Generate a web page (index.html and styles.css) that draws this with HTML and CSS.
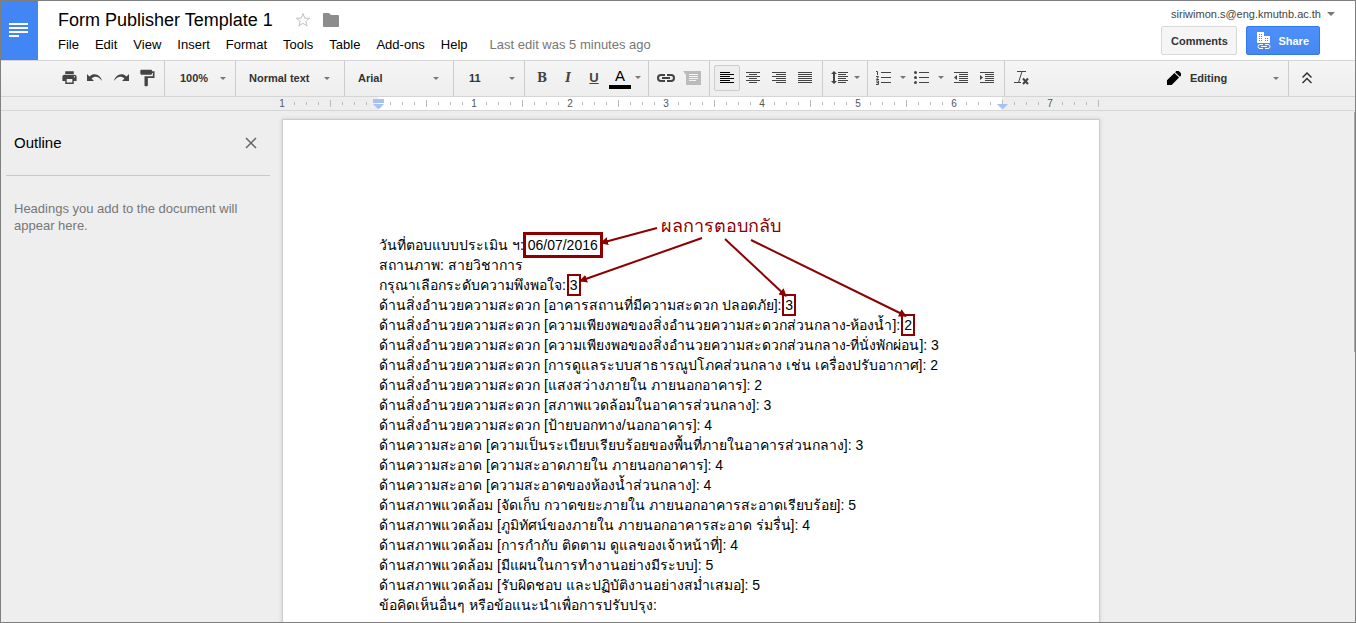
FILE: index.html
```html
<!DOCTYPE html>
<html lang="th">
<head>
<meta charset="utf-8">
<title>Form Publisher Template 1</title>
<link rel="stylesheet" href="styles.css">
</head>
<body>
<div class="app">
  <header class="header">
    <a class="logo" href="#" aria-label="Docs home">
      <svg width="19" height="14" viewBox="0 0 19 14" fill="#fff"><path d="M0 0h19v2H0zM0 4h19v2H0zM0 8h19v2H0zM0 12h10v2H0z"/></svg>
    </a>
    <div class="heading">
      <div class="title-row">
        <h1 class="title">Form Publisher Template 1</h1>
        <button class="plain" aria-label="Star"><svg width="16" height="16" viewBox="0 0 16 16" fill="none" stroke="#c0c0c0"><path d="M8 1.5l1.7 4.6 4.9.2-3.9 3 1.4 4.7L8 11.3 3.9 14l1.4-4.7-3.9-3 4.9-.2z"/></svg></button>
        <button class="plain" aria-label="Move to folder"><svg width="16" height="14" viewBox="0 0 16 14" fill="#8c8c8c"><path d="M0 1Q0 0 1 0H6l2 2h7Q16 2 16 3v10q0 1-1 1H1Q0 14 0 13z"/></svg></button>
      </div>
      <nav class="menus">
        <button>File</button><button>Edit</button><button>View</button><button>Insert</button><button>Format</button><button>Tools</button><button>Table</button><button>Add-ons</button><button>Help</button>
        <span class="last-edit">Last edit was 5 minutes ago</span>
      </nav>
    </div>
    <div class="account">
      <button class="email">siriwimon.s@eng.kmutnb.ac.th<span class="caret big"></span></button>
      <div class="actions">
        <button class="btn">Comments</button>
        <button class="btn share">
          <svg width="14" height="17" viewBox="0 0 14 17"><path fill="#fff" d="M0 0h7v4h6v7H0z"/><path fill="#4a88f4" d="M2 2h1v1H2zM4 2h1v1H4zM2 4h1v1H2zM4 4h1v1H4zM2 6h1v1H2zM4 6h1v1H4zM2 8h1v1H2zM4 8h1v1H4zM8 6h1v1H8zM10 6h1v1h-1zM8 8h1v1H8zM10 8h1v1h-1z"/><path fill="none" stroke="#fff" d="M6 12.500H3a2 2 0 0 0 0 4h3M8 12.500h3a2 2 0 0 1 0 4H8M4 14.500h6"/></svg>
          Share</button>
      </div>
    </div>
  </header>

  <div class="toolbar" role="toolbar">
    <div class="group first">
      <button class="tool" aria-label="Print"><svg width="17" height="17" viewBox="0 0 24 24"><path d="M19 8H5c-1.660 0-3 1.340-3 3v6h4v4h12v-4h4v-6c0-1.660-1.340-3-3-3zm-3 11H8v-5h8v5zm3-7c-.55 0-1-.45-1-1s.45-1 1-1 1 .45 1 1-.45 1-1 1zm-1-9H6v4h12V3z"/></svg></button>
      <button class="tool" aria-label="Undo"><svg width="16" height="10" viewBox="0 0 16 10"><path d="M0 1v7h7L4.500 5.500C8 2.500 12 3.500 15 8 14 3 8-1.500 2.500 3.500z"/></svg></button>
      <button class="tool" aria-label="Redo"><svg width="16" height="10" viewBox="0 0 16 10"><path d="M16 1v7H9l2.500-2.500C8 2.500 4 3.500 1 8 2 3 8-1.500 13.500 3.500z"/></svg></button>
      <button class="tool" aria-label="Paint format"><svg width="20" height="20" viewBox="0 0 24 24"><path d="M18 4V3c0-.55-.45-1-1-1H5c-.55 0-1 .45-1 1v4c0 .55.45 1 1 1h12c.55 0 1-.45 1-1V6h1v4H9v11c0 .55.45 1 1 1h2c.55 0 1-.45 1-1v-9h8V4h-3z"/></svg></button>
    </div>
    <div class="group pick zoom"><select aria-label="Zoom"><option>100%</option></select><span class="caret"></span></div>
    <div class="group pick style"><select aria-label="Paragraph style"><option>Normal text</option></select><span class="caret"></span></div>
    <div class="group pick font"><select aria-label="Font"><option>Arial</option></select><span class="caret"></span></div>
    <div class="group pick size"><select aria-label="Font size"><option>11</option></select><span class="caret"></span></div>
    <div class="group text-format">
      <button class="tool bold">B</button>
      <button class="tool italic">I</button>
      <button class="tool underline">U</button>
      <button class="tool color">A</button>
      <span class="caret"></span>
    </div>
    <div class="group">
      <button class="tool" aria-label="Insert link"><svg width="20" height="10" viewBox="0 0 20 10" fill="none" stroke="#444" stroke-width="2"><path d="M9 2H5a3 3 0 0 0 0 6h4M11 2h4a3 3 0 0 1 0 6h-4M6 5h8"/></svg></button>
      <button class="tool" aria-label="Insert comment"><svg width="18" height="14" viewBox="0 0 18 14"><path fill="#bbb" d="M0 0h18v14H3V4z"/><path fill="#f3f3f3" d="M6 3h9v1H6zM6 5h9v1H6zM6 7h9v1H6zM6 9h7v1H6z"/></svg></button>
    </div>
    <div class="group">
      <button class="tool active" aria-label="Left align"><svg width="14" height="11" viewBox="0 0 14 11"><path fill="#000" d="M0 0h10v1H0zM0 2h14v1H0zM0 4h10v1H0zM0 6h14v1H0zM0 8h10v1H0zM0 10h14v1H0z"/></svg></button>
      <button class="tool" aria-label="Center align"><svg width="14" height="11" viewBox="0 0 14 11"><path d="M0 0h14v1H0zM3 2h8v1H3zM0 4h14v1H0zM3 6h8v1H3zM0 8h14v1H0zM3 10h8v1H3z"/></svg></button>
      <button class="tool" aria-label="Right align"><svg width="14" height="11" viewBox="0 0 14 11"><path d="M0 0h14v1H0zM4 2h10v1H4zM0 4h14v1H0zM4 6h10v1H4zM0 8h14v1H0zM4 10h10v1H4z"/></svg></button>
      <button class="tool" aria-label="Justify"><svg width="14" height="11" viewBox="0 0 14 11"><path d="M0 0h14v1H0zM0 2h14v1H0zM0 4h14v1H0zM0 6h14v1H0zM0 8h14v1H0zM0 10h14v1H0z"/></svg></button>
    </div>
    <div class="group">
      <button class="tool wide" aria-label="Line spacing"><svg width="17" height="13" viewBox="0 0 17 13"><path d="M3 0l3 3H4v7h2l-3 3-3-3h2V3H0zM7 1h10v1H7zM7 3h8v1H7zM7 5h10v1H7zM7 7h8v1H7zM7 9h10v1H7zM7 11h8v1H7z"/></svg><span class="caret"></span></button>
    </div>
    <div class="group">
      <button class="tool wide list" aria-label="Numbered list"><svg width="15" height="14" viewBox="0 0 15 14"><path d="M5 1h10v1H5zM5 6h10v1H5zM5 11h10v1H5z"/><path fill="none" stroke="#444" d="M0 .5h1.500V4M0 5.500h2.500L.5 8.500H3M0 10h2.500v3.500H0M.5 11.700h2"/></svg><span class="caret"></span></button>
      <button class="tool wide list" aria-label="Bulleted list"><svg width="15" height="14" viewBox="0 0 15 14"><path d="M5 1h10v1H5zM5 6h10v1H5zM5 11h10v1H5z"/><circle cx="1.500" cy="1.500" r="1.500"/><circle cx="1.500" cy="6.500" r="1.500"/><circle cx="1.500" cy="11.500" r="1.500"/></svg><span class="caret"></span></button>
      <button class="tool" aria-label="Decrease indent"><svg width="14" height="11" viewBox="0 0 14 11"><path d="M0 0h14v1H0zM5 2h9v1H5zM5 4h9v1H5zM5 6h9v1H5zM5 8h9v1H5zM0 10h14v1H0zM3 3v5L0 5.500z"/></svg></button>
      <button class="tool" aria-label="Increase indent"><svg width="14" height="11" viewBox="0 0 14 11"><path d="M0 0h14v1H0zM5 2h9v1H5zM5 4h9v1H5zM5 6h9v1H5zM5 8h9v1H5zM0 10h14v1H0zM0 3v5l3-2.500z"/></svg></button>
    </div>
    <div class="group last">
      <button class="tool" aria-label="Clear formatting"><svg width="16" height="14" viewBox="0 0 16 14" fill="none" stroke="#444"><path d="M3 .5h9M8 .5L4.500 11.500M0 11.500h7"/><path stroke-width="2" d="M9 7.500l5 5.500M14 7.500L9 13"/></svg></button>
    </div>
    <div class="group pick mode">
      <svg width="14" height="14" viewBox="3 3 18 18"><path fill="#000" d="M2 16V22h6L18.500 11.500l-6-6zM21.500 8.500q1-1 0-2l-4-4q-1-1-2 0l-2 2 6 6z"/></svg>
      <select aria-label="Mode"><option>Editing</option></select><span class="caret"></span>
    </div>
    <button class="collapse" aria-label="Hide menus"><svg width="10" height="12" viewBox="0 0 10 12" fill="none" stroke="#333" stroke-width="1.500"><path d="M.5 5.500L5 1l4.500 4.500M.5 11L5 6.500 9.500 11"/></svg></button>
  </div>

  <div class="ruler">
    <svg class="scale" width="817" height="13" viewBox="0 0 817 13">
      <defs><pattern id="ticks" width="96" height="13" patternUnits="userSpaceOnUse"><path fill="#bbb" d="M12 5h1v3h-1zM24 5h1v3h-1zM36 5h1v3h-1zM48 3h1v7h-1zM60 5h1v3h-1zM72 5h1v3h-1zM84 5h1v3h-1z"/></pattern></defs>
      <rect fill="#fff" x="96" width="624" height="13"/>
      <rect fill="url(#ticks)" width="816" height="13"/>
      <path fill="#bbb" d="M816 3h1v7h-1z"/>
      <g class="numbers"><text x="0" y="10">1</text><text x="192" y="10">1</text><text x="288" y="10">2</text><text x="384" y="10">3</text><text x="480" y="10">4</text><text x="576" y="10">5</text><text x="672" y="10">6</text><text x="768" y="10">7</text></g>
      <path fill="#a4c2f4" d="M91 2h11v4H91zM91 7h11l-5 5h-1zM715 7h11l-5 5h-1z"/>
    </svg>
  </div>

  <div class="workspace">
    <aside class="outline">
      <div class="outline-head">
        <h2>Outline</h2>
        <button class="plain" aria-label="Close outline"><svg width="12" height="12" viewBox="0 0 12 12" stroke="#666" stroke-width="1.500"><path d="M1 1l10 10M11 1L1 11"/></svg></button>
      </div>
      <p>Headings you add to the document will appear here.</p>
    </aside>
    <main class="page">
      <p>วันที่ตอบแบบประเมิน ฯ: <span class="box date">06/07/2016</span></p>
      <p>สถานภาพ: สายวิชาการ</p>
      <p>กรุณาเลือกระดับความพึงพอใจ: <span class="box">3</span></p>
      <p>ด้านสิ่งอำนวยความสะดวก [อาคารสถานที่มีความสะดวก ปลอดภัย]: <span class="box">3</span></p>
      <p>ด้านสิ่งอำนวยความสะดวก [ความเพียงพอของสิ่งอำนวยความสะดวกส่วนกลาง-ห้องน้ำ]: <span class="box">2</span></p>
      <p>ด้านสิ่งอำนวยความสะดวก [ความเพียงพอของสิ่งอำนวยความสะดวกส่วนกลาง-ที่นั่งพักผ่อน]: 3</p>
      <p>ด้านสิ่งอำนวยความสะดวก [การดูแลระบบสาธารณูปโภคส่วนกลาง เช่น เครื่องปรับอากาศ]: 2</p>
      <p>ด้านสิ่งอำนวยความสะดวก [แสงสว่างภายใน ภายนอกอาคาร]: 2</p>
      <p>ด้านสิ่งอำนวยความสะดวก [สภาพแวดล้อมในอาคารส่วนกลาง]: 3</p>
      <p>ด้านสิ่งอำนวยความสะดวก [ป้ายบอกทาง/นอกอาคาร]: 4</p>
      <p>ด้านความสะอาด [ความเป็นระเบียบเรียบร้อยของพื้นที่ภายในอาคารส่วนกลาง]: 3</p>
      <p>ด้านความสะอาด [ความสะอาดภายใน ภายนอกอาคาร]: 4</p>
      <p>ด้านความสะอาด [ความสะอาดของห้องน้ำส่วนกลาง]: 4</p>
      <p>ด้านสภาพแวดล้อม [จัดเก็บ กวาดขยะภายใน ภายนอกอาคารสะอาดเรียบร้อย]: 5</p>
      <p>ด้านสภาพแวดล้อม [ภูมิทัศน์ของภายใน ภายนอกอาคารสะอาด ร่มรื่น]: 4</p>
      <p>ด้านสภาพแวดล้อม [การกำกับ ติดตาม ดูแลของเจ้าหน้าที่]: 4</p>
      <p>ด้านสภาพแวดล้อม [มีแผนในการทำงานอย่างมีระบบ]: 5</p>
      <p>ด้านสภาพแวดล้อม [รับผิดชอบ และปฏิบัติงานอย่างสม่ำเสมอ]: 5</p>
      <p>ข้อคิดเห็นอื่นๆ หรือข้อแนะนำเพื่อการปรับปรุง:</p>
      <svg class="notes" width="816" height="240" viewBox="283 120 816 240">
        <defs><marker id="head" viewBox="0 0 8 8" refX="7" refY="4" markerWidth="8" markerHeight="8" markerUnits="userSpaceOnUse" orient="auto"><path fill="#8b0000" d="M0 0l8 4-8 4z"/></marker></defs>
        <g fill="none" stroke="#8b0000" stroke-width="2">
          <path marker-end="url(#head)" d="M657 228L601 243"/>
          <path marker-end="url(#head)" d="M702 238L580 281"/>
          <path marker-end="url(#head)" d="M725 239L786 296"/>
          <path marker-end="url(#head)" d="M751 240L906 316"/>
        </g>
        <text class="note" x="661" y="232">ผลการตอบกลับ</text>
      </svg>
    </main>
    <span class="scrollbar"></span>
  </div>
</div>
</body>
</html>
```
FILE: styles.css
```css
* { box-sizing: border-box; }
body { margin: 0; font: 13px/16px "Liberation Sans", Arial, sans-serif; color: #000; }
button, select { margin: 0; padding: 0; border: 0; background: none; color: inherit; font: inherit; }
h1, h2, p { margin: 0; font-weight: normal; }
svg { display: block; flex: none; }
.app { display: flex; flex-direction: column; height: 100vh; border: 1px solid #7f7f7f; background: #eee; overflow: hidden; }

.header { display: flex; flex: none; height: 60px; background: #fff; border-bottom: 1px solid #d5d5d5; }
.logo { display: flex; align-items: center; padding: 0 8px 2px; width: 37px; background: #4285f4; }
.heading { padding: 7px 0 0 20px; }
.title-row { display: flex; align-items: center; height: 24px; }
.title { font-size: 18px; line-height: 24px; margin-right: 22px; }
.title-row .plain { margin-right: 12px; }
.menus { display: flex; gap: 16px; align-items: center; height: 26px; white-space: nowrap; }
.last-edit { color: #777; margin-left: 6px; }
.account { margin-left: auto; padding: 3px 20px 0 0; display: flex; flex-direction: column; align-items: flex-end; }
.email { display: flex; align-items: center; gap: 6px; font-size: 11px; color: #444; height: 20px; }
.actions { display: flex; gap: 9px; padding-right: 15px; margin-top: 2px; }
.btn { min-width: 76px; height: 29px; padding: 0 8px; border: 1px solid #d8d8d8; border-radius: 2px; background: #f5f5f5; color: #333; font-size: 11px; font-weight: bold; }
.share { display: flex; align-items: center; gap: 7px; min-width: 72px; padding: 0 10px; border-color: #3079ed; background: linear-gradient(#4d90fe, #4787ed); color: #fff; }

.caret { flex: none; width: 0; border: 3px solid transparent; border-top-color: #777; border-bottom: 0; }
.caret.big { border-width: 4px 4px 0; }

.toolbar { display: flex; flex: none; height: 36px; background: linear-gradient(#f5f5f5, #eee); border-bottom: 1px solid #d5d5d5; color: #333; font-size: 11px; font-weight: bold; }
.group { display: flex; align-items: center; padding: 0 4px 2px; border-right: 1px solid #ccc; }
.group.first { padding-left: 55px; }
.group.last { border: 0; }
.text-format { padding-right: 7px; }
.pick { position: relative; padding: 0 0 2px; }
.pick select { appearance: none; width: 100%; height: 32px; padding-left: 15px; }
.pick .caret { position: absolute; right: 9px; top: 16px; }
.zoom { width: 71px; }
.style { width: 109px; }
.style select, .font select { padding-left: 13px; }
.style .caret, .font .caret { right: 14px; }
.font { width: 109px; }
.size { width: 71px; }
.tool { display: flex; align-items: center; justify-content: center; flex: none; width: 26px; height: 26px; fill: #444; color: #444; font-weight: bold; }
.tool.wide { width: 36px; gap: 6px; }
.tool.list { width: 38px; gap: 9px; }
.active { background: #eee; border: 1px solid #ccc; border-radius: 2px; }
.bold { font-family: "DejaVu Serif", serif; font-size: 12px; }
.italic { font-family: "DejaVu Serif", serif; font-size: 12px; font-style: italic; }
.underline { font-size: 13px; text-decoration: underline; }
.color { width: 22px; height: 22px; margin: 0 4px 0 2px; font-size: 15px; line-height: 17px; font-weight: normal; color: #000; border-bottom: 4px solid #000; }
.mode { margin-left: auto; width: 122px; }
.mode select { padding-left: 9px; }
.collapse { width: 66px; padding: 0 0 2px 13px; }

.ruler { flex: none; height: 14px; padding-left: 281px; border-bottom: 1px solid #d5d5d5; }
.scale { overflow: visible; }
.numbers { fill: #555; font-size: 10px; text-anchor: middle; }

.workspace { position: relative; display: flex; align-items: flex-start; flex: 1; min-height: 0; overflow: hidden; }
.outline { flex: none; width: 281px; padding: 0 12px 0 5px; }
.outline-head { display: flex; align-items: center; justify-content: space-between; height: 65px; padding: 0 13px 0 8px; border-bottom: 1px solid #c8c8c8; }
.outline h2 { font-size: 15px; line-height: 20px; }
.outline p { padding: 24px 20px 0 8px; line-height: 17px; color: #777; }
.page { position: relative; flex: 0 1 818px; min-height: 1056px; margin-top: 8px; padding: 115px 96px 96px; border: 1px solid #ccc; background: #fff; box-shadow: 0 0 4px #ccc; font-size: 14px; white-space: nowrap; }
.page p { height: 20px; line-height: 20px; }
.box { outline: 2px solid #8b0000; outline-offset: 1px; }
.box.date { outline-width: 3px; outline-offset: 2px; }
.notes { position: absolute; left: 0; top: 0; }
.note { fill: #8b0000; font-size: 18px; }
.scrollbar { position: absolute; right: 0; top: 1px; width: 1px; height: 240px; background: #a8a8a8; }
```
